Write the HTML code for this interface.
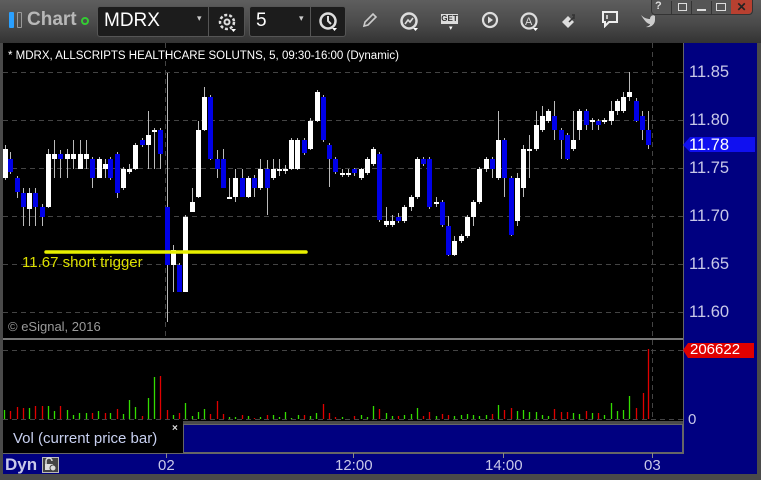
<!DOCTYPE html>
<html><head><meta charset="utf-8"><style>
*{margin:0;padding:0;box-sizing:border-box}
body{width:761px;height:480px;overflow:hidden;background:#4a4a4a;font-family:"Liberation Sans",sans-serif;position:relative}
.abs{position:absolute}
</style></head><body>
<div class="abs" style="left:0;top:0;width:761px;height:43px;background:linear-gradient(#5e5e5e,#4a4a4a 55%,#333)"></div>
<div class="abs" style="left:9px;top:12px;width:5px;height:16px;background:#2aa0ff;border-radius:1px"></div>
<div class="abs" style="left:17px;top:12px;width:5px;height:16px;border:1px solid #999;border-radius:1px"></div>
<div class="abs" style="left:27px;top:9px;font-size:19px;font-weight:bold;color:#b8b8b8">Chart</div>
<div class="abs" style="left:81px;top:17px;width:8px;height:8px;border:2px solid #3c3;border-radius:50%"></div>
<div class="abs" style="left:97px;top:6px;width:148px;height:31px;background:#1c1c1c;border:1px solid #555;border-radius:3px"></div>
<div class="abs" style="left:208px;top:7px;width:1px;height:29px;background:#555"></div>
<div class="abs" style="left:104px;top:10px;font-size:19px;color:#fff">MDRX</div>
<div class="abs" style="left:197px;top:13px;font-size:9px;color:#ccc">▾</div>
<svg class="abs" style="left:216px;top:11px" width="22" height="22" viewBox="0 0 22 22"><circle cx="11" cy="11" r="7" fill="none" stroke="#ddd" stroke-width="2.5" stroke-dasharray="3 2"/><circle cx="11" cy="11" r="2.5" fill="none" stroke="#ddd" stroke-width="2"/><path d="M15 18h5l-2.5 3z" fill="#fff"/></svg>
<div class="abs" style="left:249px;top:6px;width:97px;height:31px;background:#1c1c1c;border:1px solid #555;border-radius:3px"></div>
<div class="abs" style="left:310px;top:7px;width:1px;height:29px;background:#555"></div>
<div class="abs" style="left:256px;top:10px;font-size:19px;color:#fff">5</div>
<div class="abs" style="left:299px;top:13px;font-size:9px;color:#ccc">▾</div>
<svg class="abs" style="left:317px;top:10px" width="22" height="22" viewBox="0 0 22 22"><circle cx="11" cy="11" r="7.5" fill="none" stroke="#ddd" stroke-width="2.5"/><path d="M11 6v5l3 3" stroke="#ddd" stroke-width="2" fill="none"/><path d="M15 18h5l-2.5 3z" fill="#fff"/></svg>
<svg class="abs" style="left:360px;top:10px" width="20" height="20" viewBox="0 0 20 20"><path d="M4 16l1-4 8-8 3 3-8 8z" fill="none" stroke="#ccc" stroke-width="1.6"/></svg>
<svg class="abs" style="left:398px;top:10px" width="22" height="22" viewBox="0 0 22 22"><circle cx="11" cy="11" r="7.5" fill="none" stroke="#ddd" stroke-width="2.5"/><path d="M7 14l3-4 2 2 3-4" stroke="#ddd" stroke-width="1.6" fill="none"/><path d="M15 18h5l-2.5 3z" fill="#fff"/></svg>
<div class="abs" style="left:441px;top:14px;width:17px;height:10px;background:#ddd;color:#333;font-size:8px;font-weight:bold;line-height:10px;text-align:center">GET</div>
<div class="abs" style="left:449px;top:24px;font-size:7px;color:#fff">▾</div>
<svg class="abs" style="left:480px;top:10px" width="20" height="20" viewBox="0 0 20 20"><circle cx="10" cy="10" r="7" fill="none" stroke="#ddd" stroke-width="2.2"/><path d="M8 6.5v7l5-3.5z" fill="#ddd"/></svg>
<svg class="abs" style="left:518px;top:10px" width="22" height="22" viewBox="0 0 22 22"><circle cx="11" cy="11" r="7.5" fill="none" stroke="#ddd" stroke-width="2.2"/><text x="7" y="15" font-size="11" fill="#ddd" font-family="Liberation Sans">A</text><path d="M15 18h5l-2.5 3z" fill="#fff"/></svg>
<svg class="abs" style="left:560px;top:10px" width="20" height="20" viewBox="0 0 20 20"><path d="M2 12l6-6 6 6-6 6z" fill="#ddd"/><path d="M9 12l5-5M14 5v4M12 5h3" stroke="#333" stroke-width="1.5"/></svg>
<svg class="abs" style="left:601px;top:10px" width="18" height="18" viewBox="0 0 18 18"><path d="M2 2h14v10H8l-4 4v-4H2z" fill="none" stroke="#eee" stroke-width="2"/><path d="M6 5v4" stroke="#eee" stroke-width="1.5"/></svg>
<svg class="abs" style="left:640px;top:12px" width="16" height="16" viewBox="0 0 16 16"><path d="M1 3c3 3 6 4 9 4 0-3 3-5 5-3v4c0 4-4 8-9 7 3-1 4-2 4-3-3 0-6-4-9-9z" fill="#ccc"/></svg>
<div class="abs" style="left:651px;top:0;width:102px;height:15px;background:#555;border:1px solid #333;border-top:none;border-radius:0 0 4px 4px"></div>
<div class="abs" style="left:655px;top:0;font-size:11px;color:#ddd;font-weight:bold">?</div>
<div class="abs" style="left:671px;top:1px;width:1px;height:13px;background:#333"></div>
<div class="abs" style="left:678px;top:3px;width:9px;height:8px;border:1px solid #ddd"></div>
<div class="abs" style="left:691px;top:1px;width:1px;height:13px;background:#333"></div>
<div class="abs" style="left:697px;top:9px;width:9px;height:2px;background:#ddd"></div>
<div class="abs" style="left:711px;top:1px;width:1px;height:13px;background:#333"></div>
<div class="abs" style="left:716px;top:3px;width:10px;height:8px;border:1px solid #ddd"></div>
<div class="abs" style="left:731px;top:0;width:21px;height:14px;background:#b84030;color:#222;font-size:12px;font-weight:bold;text-align:center;line-height:14px;border-radius:0 0 4px 0">✕</div>

<div class="abs" style="left:3px;top:43px;width:680px;height:295px;background:#000"></div>
<div class="abs" style="left:683px;top:43px;width:74px;height:410px;background:#000080"></div>
<div class="abs" style="left:3px;top:338px;width:680px;height:2px;background:#777"></div>
<div class="abs" style="left:3px;top:340px;width:680px;height:81px;background:#000"></div>
<div class="abs" style="left:3px;top:421px;width:180px;height:32px;background:#000"></div>
<div class="abs" style="left:183px;top:424px;width:500px;height:29px;background:#000080;border:1px solid #666"></div>
<div class="abs" style="left:3px;top:453px;width:754px;height:21px;background:#000080"></div>
<div class="abs" style="left:3px;top:453px;width:680px;height:1px;background:#666"></div>
<div class="abs" style="left:683px;top:43px;width:1px;height:411px;background:#666"></div>

<svg class="abs" style="left:0;top:0" width="761" height="480">
<g stroke="#444" stroke-dasharray="5 4" stroke-width="1">
<line x1="3" y1="72.5" x2="683" y2="72.5"/><line x1="3" y1="120.5" x2="683" y2="120.5"/><line x1="3" y1="168.5" x2="683" y2="168.5"/><line x1="3" y1="216.5" x2="683" y2="216.5"/><line x1="3" y1="264.5" x2="683" y2="264.5"/><line x1="3" y1="312.5" x2="683" y2="312.5"/>
<line x1="3" y1="350.5" x2="683" y2="350.5"/><line x1="3" y1="419.5" x2="683" y2="419.5"/>
<line x1="165.5" y1="43" x2="165.5" y2="338"/><line x1="652.5" y1="43" x2="652.5" y2="338"/><line x1="652.5" y1="340" x2="652.5" y2="421"/>
</g>
<g stroke="#bbb" stroke-width="1">
<line x1="5.5" y1="145" x2="5.5" y2="180"/><line x1="10.5" y1="152" x2="10.5" y2="174"/><line x1="17.5" y1="176" x2="17.5" y2="198"/><line x1="23.5" y1="188" x2="23.5" y2="226"/><line x1="29.5" y1="188" x2="29.5" y2="226"/><line x1="35.5" y1="188" x2="35.5" y2="226"/><line x1="42.5" y1="204" x2="42.5" y2="226"/><line x1="48.5" y1="149" x2="48.5" y2="208"/><line x1="54.5" y1="140" x2="54.5" y2="178"/><line x1="60.5" y1="150" x2="60.5" y2="178"/><line x1="67.5" y1="149" x2="67.5" y2="178"/><line x1="73.5" y1="140" x2="73.5" y2="169"/><line x1="80.5" y1="140" x2="80.5" y2="169"/><line x1="86.5" y1="140" x2="86.5" y2="169"/><line x1="92.5" y1="157" x2="92.5" y2="188"/><line x1="99.5" y1="157" x2="99.5" y2="178"/><line x1="105.5" y1="159" x2="105.5" y2="178"/><line x1="110.5" y1="157" x2="110.5" y2="180"/><line x1="117.5" y1="152" x2="117.5" y2="198"/><line x1="123.5" y1="167" x2="123.5" y2="190"/><line x1="129.5" y1="164" x2="129.5" y2="174"/><line x1="135.5" y1="143" x2="135.5" y2="170"/><line x1="142.5" y1="138" x2="142.5" y2="147"/><line x1="148.5" y1="111" x2="148.5" y2="169"/><line x1="154.5" y1="128" x2="154.5" y2="169"/><line x1="160.5" y1="128" x2="160.5" y2="169"/><line x1="167.5" y1="73" x2="167.5" y2="322"/><line x1="173.5" y1="245" x2="173.5" y2="292"/><line x1="179.5" y1="263" x2="179.5" y2="292"/><line x1="185.5" y1="215" x2="185.5" y2="292"/><line x1="192.5" y1="188" x2="192.5" y2="212"/><line x1="198.5" y1="121" x2="198.5" y2="198"/><line x1="204.5" y1="87" x2="204.5" y2="131"/><line x1="210.5" y1="95" x2="210.5" y2="160"/><line x1="217.5" y1="150" x2="217.5" y2="178"/><line x1="223.5" y1="149" x2="223.5" y2="188"/><line x1="229.5" y1="178" x2="229.5" y2="199"/><line x1="235.5" y1="169" x2="235.5" y2="202"/><line x1="242.5" y1="169" x2="242.5" y2="197"/><line x1="248.5" y1="176" x2="248.5" y2="198"/><line x1="254.5" y1="175" x2="254.5" y2="197"/><line x1="260.5" y1="159" x2="260.5" y2="190"/><line x1="267.5" y1="160" x2="267.5" y2="215"/><line x1="273.5" y1="159" x2="273.5" y2="180"/><line x1="279.5" y1="159" x2="279.5" y2="176"/><line x1="285.5" y1="165" x2="285.5" y2="174"/><line x1="291.5" y1="138" x2="291.5" y2="170"/><line x1="297.5" y1="138" x2="297.5" y2="170"/><line x1="304.5" y1="138" x2="304.5" y2="155"/><line x1="310.5" y1="118" x2="310.5" y2="150"/><line x1="317.5" y1="90" x2="317.5" y2="122"/><line x1="323.5" y1="95" x2="323.5" y2="142"/><line x1="329.5" y1="143" x2="329.5" y2="187"/><line x1="335.5" y1="157" x2="335.5" y2="174"/><line x1="342.5" y1="169" x2="342.5" y2="177"/><line x1="348.5" y1="169" x2="348.5" y2="177"/><line x1="354.5" y1="168" x2="354.5" y2="176"/><line x1="361.5" y1="168" x2="361.5" y2="180"/><line x1="367.5" y1="157" x2="367.5" y2="175"/><line x1="373.5" y1="147" x2="373.5" y2="166"/><line x1="379.5" y1="152" x2="379.5" y2="222"/><line x1="386.5" y1="207" x2="386.5" y2="227"/><line x1="392.5" y1="215" x2="392.5" y2="227"/><line x1="398.5" y1="213" x2="398.5" y2="223"/><line x1="404.5" y1="205" x2="404.5" y2="223"/><line x1="411.5" y1="195" x2="411.5" y2="211"/><line x1="417.5" y1="157" x2="417.5" y2="199"/><line x1="423.5" y1="157" x2="423.5" y2="166"/><line x1="429.5" y1="157" x2="429.5" y2="209"/><line x1="436.5" y1="197" x2="436.5" y2="207"/><line x1="442.5" y1="200" x2="442.5" y2="227"/><line x1="448.5" y1="216" x2="448.5" y2="256"/><line x1="454.5" y1="236" x2="454.5" y2="256"/><line x1="461.5" y1="234" x2="461.5" y2="243"/><line x1="467.5" y1="215" x2="467.5" y2="238"/><line x1="473.5" y1="200" x2="473.5" y2="226"/><line x1="479.5" y1="167" x2="479.5" y2="204"/><line x1="486.5" y1="157" x2="486.5" y2="172"/><line x1="492.5" y1="157" x2="492.5" y2="178"/><line x1="498.5" y1="111" x2="498.5" y2="180"/><line x1="504.5" y1="138" x2="504.5" y2="197"/><line x1="511.5" y1="176" x2="511.5" y2="236"/><line x1="517.5" y1="173" x2="517.5" y2="226"/><line x1="523.5" y1="145" x2="523.5" y2="197"/><line x1="529.5" y1="135" x2="529.5" y2="178"/><line x1="536.5" y1="111" x2="536.5" y2="151"/><line x1="542.5" y1="106" x2="542.5" y2="132"/><line x1="548.5" y1="109" x2="548.5" y2="123"/><line x1="554.5" y1="101" x2="554.5" y2="140"/><line x1="561.5" y1="128" x2="561.5" y2="159"/><line x1="567.5" y1="133" x2="567.5" y2="160"/><line x1="573.5" y1="111" x2="573.5" y2="151"/><line x1="579.5" y1="109" x2="579.5" y2="140"/><line x1="586.5" y1="109" x2="586.5" y2="130"/><line x1="592.5" y1="118" x2="592.5" y2="130"/><line x1="598.5" y1="119" x2="598.5" y2="130"/><line x1="604.5" y1="118" x2="604.5" y2="124"/><line x1="611.5" y1="101" x2="611.5" y2="125"/><line x1="617.5" y1="99" x2="617.5" y2="115"/><line x1="623.5" y1="92" x2="623.5" y2="113"/><line x1="629.5" y1="72" x2="629.5" y2="101"/><line x1="636.5" y1="98" x2="636.5" y2="122"/><line x1="642.5" y1="111" x2="642.5" y2="140"/><line x1="648.5" y1="111" x2="648.5" y2="149"/>
</g>
<g fill="#fff">
<rect x="3" y="149" width="5" height="29"/><rect x="27" y="193" width="5" height="16"/><rect x="46" y="154" width="5" height="53"/><rect x="52" y="154" width="5" height="5"/><rect x="65" y="154" width="5" height="5"/><rect x="71" y="154" width="5" height="5"/><rect x="78" y="154" width="5" height="15"/><rect x="84" y="154" width="5" height="5"/><rect x="97" y="159" width="5" height="19"/><rect x="103" y="164" width="5" height="5"/><rect x="121" y="169" width="5" height="19"/><rect x="127" y="169" width="5" height="3"/><rect x="133" y="145" width="5" height="24"/><rect x="146" y="135" width="5" height="10"/><rect x="152" y="130" width="5" height="2"/><rect x="171" y="250" width="5" height="15"/><rect x="183" y="217" width="5" height="75"/><rect x="190" y="202" width="5" height="10"/><rect x="196" y="130" width="5" height="67"/><rect x="202" y="97" width="5" height="33"/><rect x="227" y="197" width="5" height="2"/><rect x="233" y="178" width="5" height="19"/><rect x="246" y="178" width="5" height="19"/><rect x="258" y="169" width="5" height="19"/><rect x="271" y="169" width="5" height="9"/><rect x="277" y="169" width="5" height="2"/><rect x="283" y="169" width="5" height="2"/><rect x="289" y="140" width="5" height="29"/><rect x="295" y="140" width="5" height="29"/><rect x="308" y="121" width="5" height="28"/><rect x="315" y="92" width="5" height="29"/>
<rect x="340" y="173" width="5" height="2"/><rect x="346" y="173" width="5" height="2"/><rect x="359" y="169" width="5" height="9"/><rect x="365" y="159" width="5" height="14"/><rect x="371" y="149" width="5" height="15"/><rect x="384" y="221" width="5" height="4"/><rect x="390" y="221" width="5" height="4"/><rect x="402" y="207" width="5" height="14"/><rect x="409" y="197" width="5" height="10"/><rect x="415" y="159" width="5" height="38"/><rect x="434" y="202" width="5" height="2"/><rect x="452" y="241" width="5" height="14"/><rect x="459" y="236" width="5" height="5"/><rect x="465" y="217" width="5" height="19"/><rect x="471" y="202" width="5" height="15"/><rect x="477" y="169" width="5" height="33"/><rect x="484" y="159" width="5" height="10"/><rect x="496" y="140" width="5" height="38"/><rect x="515" y="178" width="5" height="43"/><rect x="521" y="149" width="5" height="39"/><rect x="527" y="149" width="5" height="2"/><rect x="534" y="125" width="5" height="24"/><rect x="540" y="116" width="5" height="14"/><rect x="546" y="111" width="5" height="10"/><rect x="571" y="140" width="5" height="9"/><rect x="577" y="111" width="5" height="19"/><rect x="590" y="120" width="5" height="2"/><rect x="602" y="120" width="5" height="2"/><rect x="609" y="111" width="5" height="10"/><rect x="615" y="101" width="5" height="10"/><rect x="621" y="97" width="5" height="14"/><rect x="627" y="92" width="5" height="5"/>
</g>
<g fill="#0000e8">
<rect x="8" y="159" width="5" height="13"/><rect x="15" y="178" width="5" height="14"/><rect x="21" y="193" width="5" height="14"/><rect x="33" y="193" width="5" height="14"/><rect x="40" y="207" width="5" height="10"/><rect x="58" y="154" width="5" height="5"/><rect x="90" y="159" width="5" height="19"/><rect x="108" y="159" width="5" height="19"/><rect x="115" y="154" width="5" height="39"/><rect x="140" y="140" width="5" height="5"/><rect x="158" y="130" width="5" height="24"/><rect x="165" y="207" width="5" height="58"/><rect x="177" y="265" width="5" height="27"/><rect x="208" y="97" width="5" height="62"/><rect x="215" y="159" width="5" height="10"/><rect x="221" y="159" width="5" height="29"/><rect x="240" y="178" width="5" height="19"/><rect x="252" y="178" width="5" height="10"/><rect x="265" y="169" width="5" height="19"/><rect x="302" y="140" width="5" height="13"/><rect x="321" y="97" width="5" height="43"/><rect x="327" y="145" width="5" height="14"/><rect x="333" y="159" width="5" height="13"/><rect x="352" y="169" width="5" height="4"/><rect x="377" y="154" width="5" height="66"/><rect x="396" y="217" width="5" height="4"/><rect x="421" y="159" width="5" height="5"/><rect x="427" y="159" width="5" height="48"/><rect x="440" y="202" width="5" height="23"/><rect x="446" y="226" width="5" height="29"/><rect x="490" y="159" width="5" height="10"/><rect x="502" y="140" width="5" height="38"/><rect x="509" y="178" width="5" height="57"/><rect x="552" y="116" width="5" height="14"/><rect x="559" y="130" width="5" height="10"/><rect x="565" y="135" width="5" height="24"/><rect x="584" y="111" width="5" height="14"/><rect x="596" y="121" width="5" height="4"/><rect x="634" y="101" width="5" height="20"/><rect x="640" y="116" width="5" height="14"/><rect x="646" y="130" width="5" height="15"/>
</g>
<line x1="46" y1="252" x2="306" y2="252" stroke="#e8f000" stroke-width="3.5" stroke-linecap="round"/>
<g stroke-width="1.3">
<g stroke="#33dd00"><line x1="4.5" y1="419" x2="4.5" y2="410"/><line x1="29.5" y1="419" x2="29.5" y2="408"/><line x1="48.5" y1="419" x2="48.5" y2="406"/><line x1="54.5" y1="419" x2="54.5" y2="411"/><line x1="67.5" y1="419" x2="67.5" y2="410"/><line x1="73.5" y1="419" x2="73.5" y2="415"/><line x1="79.5" y1="419" x2="79.5" y2="413"/><line x1="86.5" y1="419" x2="86.5" y2="413"/><line x1="98.5" y1="419" x2="98.5" y2="411"/><line x1="110.5" y1="419" x2="110.5" y2="413"/><line x1="123.5" y1="419" x2="123.5" y2="414"/><line x1="129.5" y1="419" x2="129.5" y2="400"/><line x1="135.5" y1="419" x2="135.5" y2="407"/><line x1="148.5" y1="419" x2="148.5" y2="398"/><line x1="154.5" y1="419" x2="154.5" y2="377"/><line x1="173.5" y1="419" x2="173.5" y2="415"/><line x1="185.5" y1="419" x2="185.5" y2="403"/><line x1="192.5" y1="419" x2="192.5" y2="416"/><line x1="198.5" y1="419" x2="198.5" y2="412"/><line x1="204.5" y1="419" x2="204.5" y2="409"/><line x1="229.5" y1="419" x2="229.5" y2="417"/><line x1="235.5" y1="419" x2="235.5" y2="417"/><line x1="248.5" y1="419" x2="248.5" y2="416"/><line x1="260.5" y1="419" x2="260.5" y2="417"/><line x1="273.5" y1="419" x2="273.5" y2="415"/><line x1="279.5" y1="419" x2="279.5" y2="417"/><line x1="285.5" y1="419" x2="285.5" y2="412"/><line x1="291.5" y1="419" x2="291.5" y2="418"/><line x1="298.5" y1="419" x2="298.5" y2="415"/><line x1="310.5" y1="419" x2="310.5" y2="416"/><line x1="316.5" y1="419" x2="316.5" y2="413"/><line x1="342.5" y1="419" x2="342.5" y2="417"/><line x1="361.5" y1="419" x2="361.5" y2="415"/><line x1="367.5" y1="419" x2="367.5" y2="417"/><line x1="373.5" y1="419" x2="373.5" y2="406"/><line x1="386.5" y1="419" x2="386.5" y2="413"/><line x1="392.5" y1="419" x2="392.5" y2="416"/><line x1="404.5" y1="419" x2="404.5" y2="415"/><line x1="411.5" y1="419" x2="411.5" y2="414"/><line x1="417.5" y1="419" x2="417.5" y2="408"/><line x1="436.5" y1="419" x2="436.5" y2="416"/><line x1="454.5" y1="419" x2="454.5" y2="416"/><line x1="461.5" y1="419" x2="461.5" y2="415"/><line x1="467.5" y1="419" x2="467.5" y2="414"/><line x1="473.5" y1="419" x2="473.5" y2="415"/><line x1="479.5" y1="419" x2="479.5" y2="416"/><line x1="486.5" y1="419" x2="486.5" y2="415"/><line x1="498.5" y1="419" x2="498.5" y2="405"/><line x1="517.5" y1="419" x2="517.5" y2="411"/><line x1="523.5" y1="419" x2="523.5" y2="410"/><line x1="529.5" y1="419" x2="529.5" y2="412"/><line x1="536.5" y1="419" x2="536.5" y2="412"/><line x1="542.5" y1="419" x2="542.5" y2="415"/><line x1="548.5" y1="419" x2="548.5" y2="416"/><line x1="573.5" y1="419" x2="573.5" y2="413"/><line x1="579.5" y1="419" x2="579.5" y2="414"/><line x1="592.5" y1="419" x2="592.5" y2="413"/><line x1="604.5" y1="419" x2="604.5" y2="415"/><line x1="611.5" y1="419" x2="611.5" y2="403"/><line x1="617.5" y1="419" x2="617.5" y2="411"/><line x1="623.5" y1="419" x2="623.5" y2="410"/><line x1="629.5" y1="419" x2="629.5" y2="396"/></g>
<g stroke="#e00000"><line x1="10.5" y1="419" x2="10.5" y2="411"/><line x1="17.5" y1="419" x2="17.5" y2="407"/><line x1="23.5" y1="419" x2="23.5" y2="408"/><line x1="35.5" y1="419" x2="35.5" y2="406"/><line x1="42.5" y1="419" x2="42.5" y2="406"/><line x1="60.5" y1="419" x2="60.5" y2="406"/><line x1="92.5" y1="419" x2="92.5" y2="413"/><line x1="105.5" y1="419" x2="105.5" y2="413"/><line x1="117.5" y1="419" x2="117.5" y2="409"/><line x1="142.5" y1="419" x2="142.5" y2="416"/><line x1="160.5" y1="419" x2="160.5" y2="376"/><line x1="167.5" y1="419" x2="167.5" y2="410"/><line x1="179.5" y1="419" x2="179.5" y2="413"/><line x1="210.5" y1="419" x2="210.5" y2="414"/><line x1="217.5" y1="419" x2="217.5" y2="401"/><line x1="223.5" y1="419" x2="223.5" y2="414"/><line x1="242.5" y1="419" x2="242.5" y2="415"/><line x1="254.5" y1="419" x2="254.5" y2="418"/><line x1="267.5" y1="419" x2="267.5" y2="415"/><line x1="304.5" y1="419" x2="304.5" y2="415"/><line x1="323.5" y1="419" x2="323.5" y2="404"/><line x1="329.5" y1="419" x2="329.5" y2="413"/><line x1="335.5" y1="419" x2="335.5" y2="417"/><line x1="354.5" y1="419" x2="354.5" y2="416"/><line x1="379.5" y1="419" x2="379.5" y2="409"/><line x1="398.5" y1="419" x2="398.5" y2="416"/><line x1="423.5" y1="419" x2="423.5" y2="416"/><line x1="429.5" y1="419" x2="429.5" y2="412"/><line x1="442.5" y1="419" x2="442.5" y2="414"/><line x1="448.5" y1="419" x2="448.5" y2="415"/><line x1="492.5" y1="419" x2="492.5" y2="414"/><line x1="504.5" y1="419" x2="504.5" y2="410"/><line x1="511.5" y1="419" x2="511.5" y2="408"/><line x1="554.5" y1="419" x2="554.5" y2="409"/><line x1="561.5" y1="419" x2="561.5" y2="412"/><line x1="567.5" y1="419" x2="567.5" y2="412"/><line x1="586.5" y1="419" x2="586.5" y2="411"/><line x1="598.5" y1="419" x2="598.5" y2="413"/><line x1="636.5" y1="419" x2="636.5" y2="408"/><line x1="643.5" y1="419" x2="643.5" y2="393"/><line x1="648.5" y1="419" x2="648.5" y2="349"/></g>
</g>
<line x1="166.5" y1="453" x2="166.5" y2="458" stroke="#888"/><line x1="353.5" y1="453" x2="353.5" y2="458" stroke="#888"/><line x1="503.5" y1="453" x2="503.5" y2="458" stroke="#888"/><line x1="652.5" y1="453" x2="652.5" y2="458" stroke="#888"/>
<path d="M683 145l7-8h65v15h-65z" fill="#1010f0"/>
<path d="M683 350l5-7h66v15h-66z" fill="#e00000"/>
<rect x="42.5" y="457.5" width="16" height="15" fill="#444" stroke="#bbb"/>
<path d="M46 464v-3a3 3 0 0 1 6 0" fill="none" stroke="#ddd" stroke-width="1.5"/><rect x="45" y="464" width="8" height="6" fill="#ddd"/><circle cx="53" cy="468" r="3" fill="#ddd" stroke="#444"/>
</svg>
<div class="abs" style="left:8px;top:50px;font-size:11.5px;color:#fff;white-space:nowrap">* MDRX, ALLSCRIPTS HEALTHCARE SOLUTNS, 5, 09:30-16:00 (Dynamic)</div>
<div class="abs" style="left:22px;top:254px;font-size:15px;color:#dde000">11.67 short trigger</div>
<div class="abs" style="left:8px;top:319px;font-size:13px;color:#9a9a9a">© eSignal, 2016</div>
<div class="abs" style="left:689px;top:62px;font-size:16.5px;color:#c8c8e8;line-height:20px">11.85</div>
<div class="abs" style="left:689px;top:110px;font-size:16.5px;color:#c8c8e8;line-height:20px">11.80</div>
<div class="abs" style="left:689px;top:135px;font-size:16.5px;color:#fff;line-height:20px">11.78</div>
<div class="abs" style="left:689px;top:158px;font-size:16.5px;color:#c8c8e8;line-height:20px">11.75</div>
<div class="abs" style="left:689px;top:206px;font-size:16.5px;color:#c8c8e8;line-height:20px">11.70</div>
<div class="abs" style="left:689px;top:254px;font-size:16.5px;color:#c8c8e8;line-height:20px">11.65</div>
<div class="abs" style="left:689px;top:302px;font-size:16.5px;color:#c8c8e8;line-height:20px">11.60</div>
<div class="abs" style="left:690px;top:340px;font-size:15px;color:#fff;line-height:20px">206622</div>
<div class="abs" style="left:688px;top:410px;font-size:15px;color:#c8c8e8;line-height:20px">0</div>
<div class="abs" style="left:13px;top:430px;font-size:15px;color:#c8d0f0">Vol (current price bar)</div>
<div class="abs" style="left:172px;top:423px;font-size:10px;color:#ddd;font-weight:bold">×</div>
<div class="abs" style="left:5px;top:455px;font-size:17px;font-weight:bold;color:#c8c8e8">Dyn</div>
<div class="abs" style="left:158px;top:457px;font-size:15px;color:#c8c8e8">02</div>
<div class="abs" style="left:335px;top:457px;font-size:15px;color:#c8c8e8">12:00</div>
<div class="abs" style="left:485px;top:457px;font-size:15px;color:#c8c8e8">14:00</div>
<div class="abs" style="left:644px;top:457px;font-size:15px;color:#c8c8e8">03</div>
</body></html>
